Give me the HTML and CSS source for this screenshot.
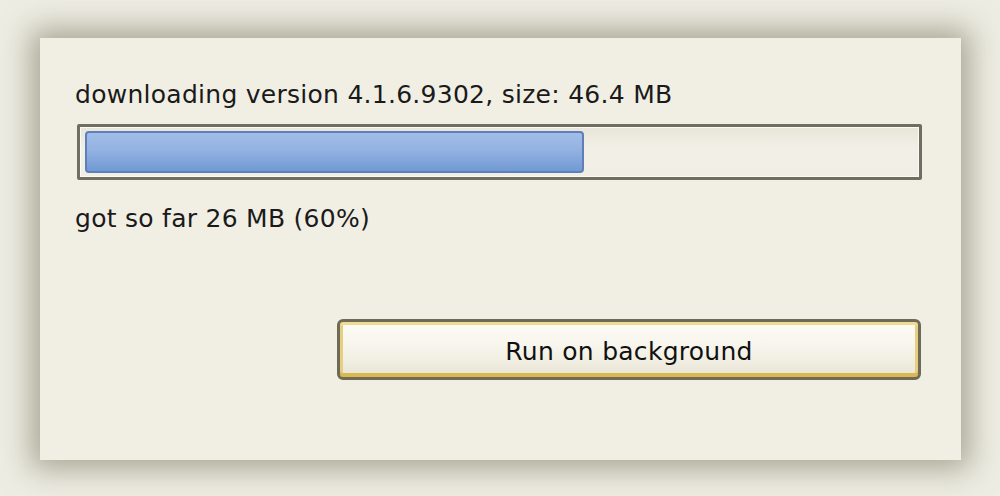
FILE: index.html
```html
<!DOCTYPE html>
<html>
<head>
<meta charset="utf-8">
<link rel="stylesheet" href="styles.css">
</head>
<body>
<div class="stage">
  <div class="panel">
    <div class="label top-label">downloading version 4.1.6.9302, size: 46.4 MB</div>
    <div class="progress">
      <div class="fill" style="width: 60%"></div>
    </div>
    <div class="label got-label">got so far 26 MB (60%)</div>
    <div class="actions">
      <button class="btn">Run on background</button>
    </div>
  </div>
</div>
</body>
</html>
```
FILE: styles.css
```css
html, body {
  margin: 0;
  padding: 0;
  background: #eeede3;
  width: 1000px;
  height: 496px;
  overflow: hidden;
}
.stage {
  padding: 38px 39px 36px 40px;
}
.panel {
  box-sizing: border-box;
  width: 921px;
  height: 422px;
  background: #f1efe4;
  box-shadow: 0 0 28px 9px rgba(125, 123, 102, 0.62);
  padding: 0 39px 0 35px;
  display: flex;
  flex-direction: column;
  font-family: "DejaVu Sans", Verdana, sans-serif;
  color: #1a1a1a;
}
.label {
  font-size: 25px;
  line-height: 28px;
  letter-spacing: 0.27px;
}
.top-label {
  margin-top: 43px;
}
.progress {
  box-sizing: border-box;
  margin: 15px 0 0 2px;
  height: 56px;
  border: 3px solid #6e6e62;
  border-radius: 2px;
  background: linear-gradient(#e8e6da, #f2f0e6 40%, #f1efe5);
  padding: 4px 4px;
  box-shadow: inset 0 0 0 1px #fbfaf4;
}
.fill {
  box-sizing: border-box;
  height: 100%;
  border: 2px solid #5f7fb8;
  border-radius: 4px;
  background: linear-gradient(#a2bde8, #93b2e2 45%, #7199d4);
  margin-left: 1px;
}
.got-label {
  margin-top: 25px;
}
.actions {
  display: flex;
  justify-content: flex-end;
  margin-top: 86px;
}
.btn {
  box-sizing: border-box;
  width: 584px;
  height: 61px;
  border: 3px solid #6f6a55;
  border-radius: 6px;
  background: linear-gradient(#fdfcf6, #f6f4ea 50%, #e8e5d6);
  box-shadow: inset 0 3px 0 #f1dc96, inset 0 -4px 0 #d9b950, inset 3px 0 0 #e6cf80, inset -3px 0 0 #e6cf80;
  font-family: "DejaVu Sans", Verdana, sans-serif;
  font-size: 25px;
  letter-spacing: 0.27px;
  color: #111;
  padding: 3px 0 0 0;
  margin-right: 1px;
}
```
